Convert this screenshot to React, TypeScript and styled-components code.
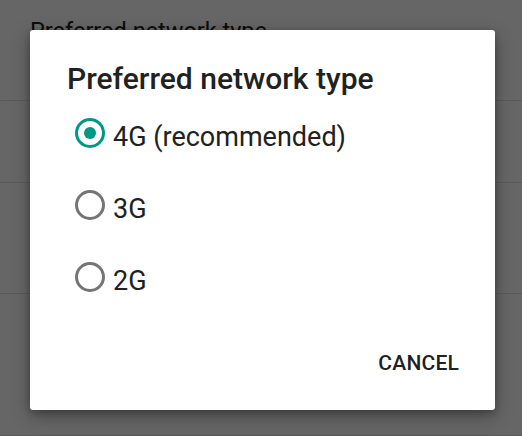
import React from "react";
import styled, { createGlobalStyle } from "styled-components";

const Global = createGlobalStyle`
  html, body { margin: 0; padding: 0; }
  body {
    width: 522px;
    height: 436px;
    overflow: hidden;
    background: #ffffff;
    font-family: Roboto, "Noto Sans", "Liberation Sans", sans-serif;
  }
`;

const Screen = styled.div`
  position: relative;
  width: 522px;
  height: 436px;
  overflow: hidden;
  background: #ffffff;
`;

const SettingsList = styled.div`
  display: flex;
  flex-direction: column;
`;

const SettingRow = styled.div<{ $h: number }>`
  height: ${(p) => p.$h}px;
  box-sizing: border-box;
  border-bottom: 1px solid #e2e2e2;
  padding: 17px 30px 0;
  color: #212121;
  font-size: 23.5px;
  line-height: 28px;
`;

const Scrim = styled.div`
  position: absolute;
  inset: 0;
  background: rgba(0, 0, 0, 0.6);
`;

const Dialog = styled.div`
  position: absolute;
  left: 30px;
  top: 30px;
  width: 465px;
  height: 380px;
  box-sizing: border-box;
  background: #ffffff;
  border-radius: 3px;
  box-shadow: 0 6px 18px rgba(0, 0, 0, 0.35), 0 2px 6px rgba(0, 0, 0, 0.2);
  padding: 31px 36px 0 37px;
  display: flex;
  flex-direction: column;
`;

const Title = styled.h2`
  margin: 0;
  font-size: 30px;
  line-height: 36px;
  font-weight: 500;
  color: #212121;
`;

const Options = styled.div`
  display: flex;
  flex-direction: column;
  margin-left: 8px;
`;

const Option = styled.label`
  display: flex;
  align-items: center;
  height: 72px;
  gap: 8px;
  cursor: pointer;
`;

const Ring = styled.span<{ $checked: boolean }>`
  width: 30px;
  height: 30px;
  box-sizing: border-box;
  border-radius: 50%;
  border: 3px solid ${(p) => (p.$checked ? "#009688" : "#757575")};
  display: flex;
  align-items: center;
  justify-content: center;
  flex: none;
`;

const Dot = styled.span`
  width: 12px;
  height: 12px;
  border-radius: 50%;
  background: #009688;
`;

const OptionText = styled.span`
  font-size: 27px;
  line-height: 32px;
  color: #212121;
  padding-top: 8px;
`;

const Actions = styled.div`
  display: flex;
  justify-content: flex-end;
  margin-top: 38px;
`;

const TextButton = styled.button`
  border: none;
  background: none;
  padding: 0;
  font-family: inherit;
  font-size: 21px;
  line-height: 24px;
  font-weight: 500;
  letter-spacing: 0.2px;
  color: #212121;
  text-transform: uppercase;
  cursor: pointer;
`;

const options = [
  { label: "4G (recommended)", checked: true },
  { label: "3G", checked: false },
  { label: "2G", checked: false },
];

export default function App() {
  return (
    <Screen>
      <Global />
      <SettingsList>
        <SettingRow $h={101}>Preferred network type</SettingRow>
        <SettingRow $h={82}>&nbsp;</SettingRow>
        <SettingRow $h={111}>&nbsp;</SettingRow>
        <SettingRow $h={142}>&nbsp;</SettingRow>
      </SettingsList>
      <Scrim />
      <Dialog role="dialog">
        <Title>Preferred network type</Title>
        <Options>
          {options.map((o) => (
            <Option key={o.label}>
              <Ring $checked={o.checked}>{o.checked && <Dot />}</Ring>
              <OptionText>{o.label}</OptionText>
            </Option>
          ))}
        </Options>
        <Actions>
          <TextButton>Cancel</TextButton>
        </Actions>
      </Dialog>
    </Screen>
  );
}
